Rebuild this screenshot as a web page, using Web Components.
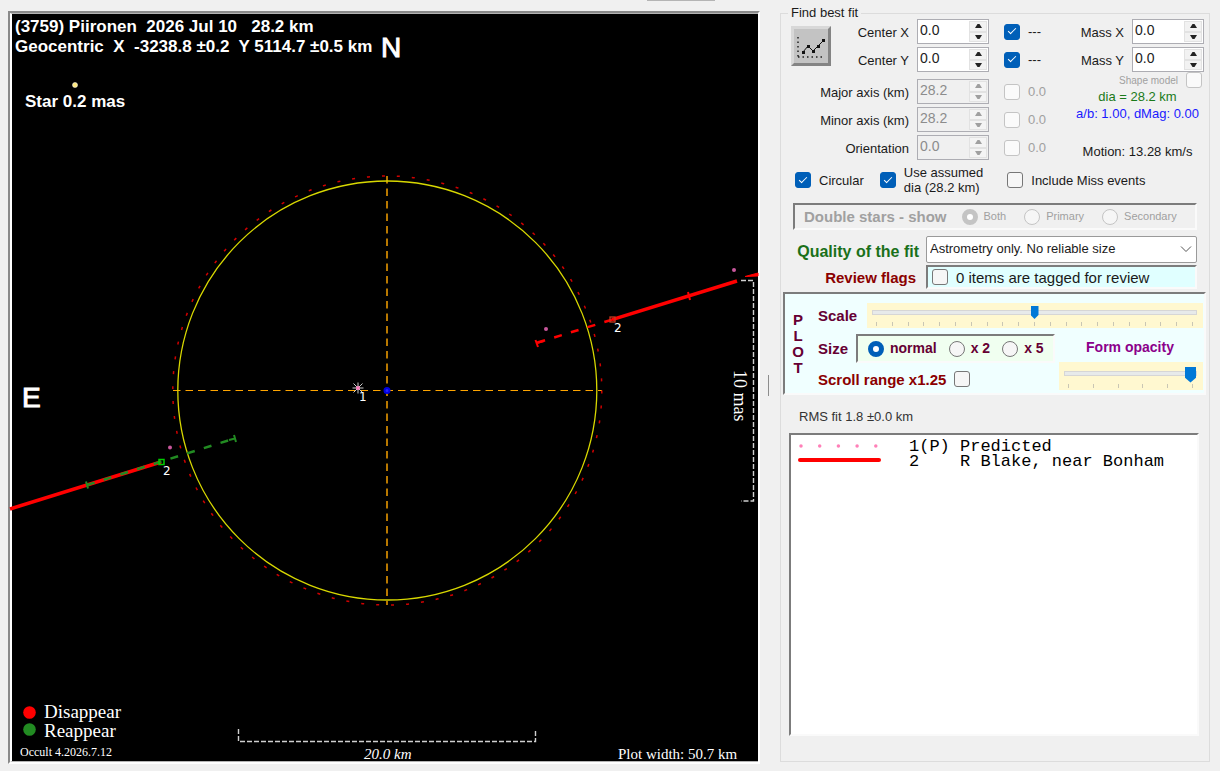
<!DOCTYPE html>
<html lang="en">
<head>
<meta charset="utf-8">
<title>Occult - Asteroid plot</title>
<style>
  body {
    margin: 0;
    background: #f0f0f0;
    color: #1a1a1a;
    font-family: "Liberation Sans", Arial, sans-serif;
    font-size: 13px;
    line-height: 15px;
  }
</style>
</head>
<body>
<occult-window>
  <star-plot slot="plot"></star-plot>
  <fit-panel slot="side"></fit-panel>
</occult-window>

<script>
// Attach an open shadow root and fill it
class BaseElement extends HTMLElement {
    constructor() {
        super();
        this.attachShadow({ mode: 'open' });
    }

    connectedCallback() {
        this.shadowRoot.innerHTML = this.render();
        this.ready();
    }

    attr(name, fallback = '') {
        return this.getAttribute(name) ?? fallback;
    }

    ready() {}
}

class OccultWindow extends BaseElement {
    render() {
        return `
        <style>
          :host {
            display: flex;
            box-sizing: border-box;
            min-height: 100vh;
            padding: 7px 10px 7px 8px;
            position: relative;
          }
          .edge {
            position: absolute;
            top: 0;
            left: 53%;
            width: 68px;
            height: 1px;
            background: #b4b4b4;
          }
          .plot { flex: 1; min-width: 0; display: flex; margin-top: 4px; }
          .splitter {
            width: 20px;
            display: flex;
            align-items: center;
            justify-content: center;
            box-sizing: border-box;
            padding-right: 4px;
          }
          .grip { width: 1px; height: 21px; background: #8c8c8c; }
          .side { flex: 0 0 430px; display: flex; margin-bottom: 2px; }
        </style>
        <div class="edge"></div>
        <div class="plot"><slot name="plot"></slot></div>
        <div class="splitter"><div class="grip"></div></div>
        <div class="side"><slot name="side"></slot></div>
      `;
    }
}

class StarPlot extends BaseElement {
    render() {
        return `
        <style>
          :host {
            flex: 1;
            display: flex;
            min-width: 0;
            border: 2px solid;
            border-color: #8a8a8a #fff #fff #8a8a8a;
            background: #000;
          }
          svg {
            flex: 1;
            min-width: 0;
            display: block;
            border: solid;
            border-width: 1px 0 1px 2px;
            border-color: #b4b4b4 #b4b4b4 #b4b4b4 #fff;
            overflow: visible;
          }
          text { fill: #fff; white-space: pre; }
          .title { font: bold 17px "Liberation Sans", Arial, sans-serif; }
          .compass { font: 28px "Liberation Sans", Arial, sans-serif; stroke: #fff; stroke-width: 1; }
          .chord-no { font: 12px "DejaVu Sans", Verdana, sans-serif; }
          .serif { font-family: "Liberation Serif", "Times New Roman", serif; }
          .key { font-size: 19px; }
          .mas { font-size: 18px; }
          .note { font-size: 15px; }
          .small { font-size: 12px; }
          .italic { font-style: italic; }
        </style>
        <svg viewBox="12 14 746 747" role="img" aria-label="Occultation chords">
          <!-- fitted ellipse, its error ring and axes -->
          <g fill="none">
            <path d="M387 176V605" stroke="#b87800" stroke-width="2" stroke-dasharray="7.5 5"/>
            <path d="M173 390.5H602" stroke="#ffa500" stroke-dasharray="7.5 5"/>
            <circle cx="387.3" cy="390.5" r="214.5" stroke="#d00000" stroke-width="1.5" stroke-dasharray="3 12"/>
            <circle cx="387.3" cy="390.5" r="209.5" stroke="#d8d800" stroke-width="1.3"/>
          </g>

          <!-- observed chord with disappear / reappear error bars -->
          <g fill="none" stroke="#f00">
            <path d="M10 509L161 462M612 319.7L737 281" stroke-width="3.5"/>
            <path d="M745 276.500L758 273V276Z" fill="#f00" stroke-width="1"/>
            <path d="M612 319.7L536 343" stroke-width="2.5" stroke-dasharray="8 9.500"/>
            <path d="M537 343L544 341M535.500 340L538 347M688 292L690 300" stroke-width="2"/>
          </g>
          <g fill="none" stroke="#228b22">
            <path d="M87 485L236 438" stroke-width="2.5" stroke-dasharray="8 9.500"/>
            <path d="M86 481.500L88 488.500M234 435L236 442M229 440L235 438.500" stroke-width="2"/>
          </g>
          <rect x="159" y="459.500" width="5" height="5" fill="none" stroke="#0c0" stroke-width="1.5"/>
          <rect x="610" y="317" width="5" height="5" fill="none" stroke="#c33a20" stroke-width="1.3"/>

          <!-- predicted path -->
          <g fill="#c8579c">
            <circle cx="170" cy="447.500" r="2"/>
            <circle cx="546" cy="329" r="2"/>
            <circle cx="734" cy="270" r="2"/>
          </g>
          <path d="M352.500 388H363.500M358 382.500V393.500M353.500 383.500L362.500 392.500M362.500 383.500L353.500 392.500" stroke="#ccc"/>
          <circle cx="358" cy="388" r="2" fill="#ff80c0"/>
          <circle cx="387" cy="390.500" r="2.5" fill="#22f" stroke="#00d" stroke-width="2"/>
          <circle cx="75" cy="85" r="2.500" fill="#ffe87c" stroke="#eee" stroke-width="0.6"/>

          <!-- scale brackets -->
          <g fill="none" stroke="#d0d0d0" stroke-width="1.4">
            <path d="M741 280.500H753.500V501H741" stroke-dasharray="5 2"/>
            <path d="M238.500 729V741.500H535.500V729" stroke-dasharray="5 2"/>
          </g>

          <text class="title" x="15" y="32">(3759) Piironen  2026 Jul 10   28.2 km</text>
          <text class="title" x="15" y="52">Geocentric  X  -3238.8 ±0.2  Y 5114.7 ±0.5 km</text>
          <text class="title" x="25" y="107">Star 0.2 mas</text>
          <text class="compass" x="381" y="57">N</text>
          <text class="compass" x="22" y="407">E</text>
          <text class="chord-no" x="359" y="401">1</text>
          <text class="chord-no" x="163" y="475">2</text>
          <text class="chord-no" x="614" y="332">2</text>
          <text class="serif mas" transform="translate(734 370) rotate(90)">10 mas</text>
          <circle cx="29.500" cy="712.500" r="6.300" fill="#f00"/>
          <circle cx="29.500" cy="729.500" r="6.300" fill="#228b22"/>
          <text class="serif key" x="44" y="718">Disappear</text>
          <text class="serif key" x="44" y="737">Reappear</text>
          <text class="serif small" x="20" y="756">Occult 4.2026.7.12</text>
          <text class="serif note italic" x="364" y="759">20.0 km</text>
          <text class="serif note" x="618" y="759">Plot width: 50.7 km</text>
        </svg>
      `;
    }
}

// Label with a numeric up / down box
class NumBox extends BaseElement {
    render() {
        const off = this.hasAttribute('disabled') ? 'disabled' : '';
        return `
        <style>
          :host { display: flex; justify-content: flex-end; align-items: center; gap: 8px; height: 25px; }
          label { padding-top: 2px; white-space: nowrap; }
          .box {
            display: flex;
            box-sizing: border-box;
            width: 72px;
            height: 25px;
            border: 1px solid #adadb3;
            background: #fff;
          }
          input {
            flex: 1;
            min-width: 0;
            border: 0;
            padding: 0 0 3px 2px;
            background: none;
            font: inherit;
            font-size: 14px;
            color: #222;
            outline: none;
          }
          .spin { display: flex; flex-direction: column; width: 18px; padding: 1px; }
          button {
            flex: 1;
            display: flex;
            align-items: center;
            justify-content: center;
            border: 1px solid #e2e2e2;
            background: #f2f2f2;
            padding: 0;
            color: #222;
          }
          svg { width: 7px; height: 4px; fill: currentColor; }
          .off { background: #f0f0f0; }
          .off input { color: #8c8c8c; }
          .off button { color: #a0a0a0; background: #f4f4f4; }
        </style>
        <label for="value">${this.attr('label')}</label>
        <div class="box ${off && 'off'}">
          <input id="value" type="text" inputmode="decimal" value="${this.attr('value', '0.0')}" ${off}>
          <div class="spin">
            <button id="up" aria-label="Increase" ${off}><svg viewBox="0 0 7 4"><path d="M2.500 0h2L7 4H0z"/></svg></button>
            <button id="down" aria-label="Decrease" ${off}><svg viewBox="0 0 7 4"><path d="M0 0h7L4.500 4h-2z"/></svg></button>
          </div>
        </div>
      `;
    }

    ready() {
        const input = this.shadowRoot.getElementById('value');
        const step = (d) => { input.value = (parseFloat(input.value) + d).toFixed(1); };
        this.shadowRoot.getElementById('up').addEventListener('click', () => step(0.1));
        this.shadowRoot.getElementById('down').addEventListener('click', () => step(-0.1));
    }
}

class CheckBox extends BaseElement {
    render() {
        const on = this.hasAttribute('checked') ? 'checked' : '';
        const off = this.hasAttribute('disabled') ? 'disabled' : '';
        return `
        <style>
          :host { display: flex; align-items: center; gap: 8px; }
          :host([reverse]) { flex-direction: row-reverse; justify-content: flex-start; }
          input {
            appearance: none;
            flex: none;
            box-sizing: border-box;
            width: 16px;
            height: 16px;
            margin: 0;
            border: 1px solid #777;
            border-radius: 3px;
            background: #f6f6f6;
            display: grid;
            place-items: center;
          }
          input:checked { background: #005fb8; border-color: #005fb8; }
          input:checked::after {
            content: "";
            width: 7px;
            height: 3px;
            margin-bottom: 3px;
            border: solid #fff;
            border-width: 0 0 1px 1px;
            transform: rotate(-45deg);
          }
          input:disabled { border-color: #c4c4c4; background: #fafafa; }
          input:disabled + label { color: #a0a0a0; }
        </style>
        <input id="check" type="checkbox" ${on} ${off}>
        <label for="check"><slot></slot></label>
      `;
    }
}

// options="a|b|c", first one is selected
class RadioGroup extends BaseElement {
    render() {
        const off = this.hasAttribute('disabled') ? 'disabled' : '';
        const items = this.attr('options').split('|').map((name, i) => `
          <span>
            <input type="radio" name="choice" id="r${i}" ${i === 0 ? 'checked' : ''} ${off}>
            <label for="r${i}">${name}</label>
          </span>`).join('');
        return `
        <style>
          :host { display: flex; align-items: center; gap: var(--radio-gap, 12px); }
          span { display: flex; align-items: center; gap: 6px; }
          input {
            appearance: none;
            box-sizing: border-box;
            width: 16px;
            height: 16px;
            margin: 0;
            border: 1px solid #777;
            border-radius: 50%;
            background: #f6f6f6;
          }
          input:checked { border: 5px solid #005fb8; background: #fff; }
          input:disabled { border-color: #c4c4c4; }
          label { white-space: nowrap; }
        </style>
        ${items}
      `;
    }
}

class TrackBar extends BaseElement {
    render() {
        const count = Number(this.attr('ticks', '11'));
        return `
        <style>
          :host { display: block; background: #fff8d0; padding: 3px 6px 2px 5px; }
          input {
            appearance: none;
            display: block;
            width: 100%;
            height: var(--thumb-height, 13px);
            margin: 0;
            background: none;
          }
          input::-webkit-slider-runnable-track {
            height: 5px;
            box-sizing: border-box;
            background: #e7eaea;
            border: 1px solid #d6d6d6;
          }
          input::-webkit-slider-thumb {
            appearance: none;
            width: var(--thumb-width, 8px);
            height: var(--thumb-height, 13px);
            margin-top: -5px;
            background: #0078d7;
            clip-path: polygon(0 0, 100% 0, 100% 70%, 50% 100%, 0 70%);
          }
          .ticks { display: flex; justify-content: space-between; padding: 3px 4px 0; }
          .ticks i { width: 1px; height: 4px; background: #c9c6b4; }
        </style>
        <input type="range" min="0" max="100" value="${this.attr('value', '50')}" aria-label="${this.attr('label')}">
        <div class="ticks">${'<i></i>'.repeat(count)}</div>
      `;
    }
}

// Sunken 3D border
class SunkenBox extends BaseElement {
    render() {
        return `
        <style>
          :host {
            display: flex;
            box-sizing: border-box;
            border: 2px solid;
            border-color: #7c7c7c #fafafa #fafafa #7c7c7c;
          }
        </style>
        <slot></slot>
      `;
    }
}

class ChordList extends BaseElement {
    render() {
        return `
        <style>
          :host {
            display: block;
            font: 17px/15px "Liberation Mono", "Courier New", monospace;
            color: #000;
            padding: 4px 7px;
          }
          .row { display: flex; gap: 28px; white-space: pre; }
          svg { width: 83px; height: 15px; flex: none; }
        </style>
        <div class="row">
          <svg viewBox="0 0 83 15"><path d="M3 7H80" stroke="#ff80b8" stroke-width="3.500" stroke-linecap="round" stroke-dasharray="0 18.700"/></svg>
          <span>1(P) Predicted</span>
        </div>
        <div class="row">
          <svg viewBox="0 0 83 15"><path d="M2 6H81" stroke="#f00" stroke-width="4" stroke-linecap="round"/></svg>
          <span>2    R Blake, near Bonham</span>
        </div>
      `;
    }
}

class FitPanel extends BaseElement {
    render() {
        return `
        <style>
          :host { flex: 1; display: flex; min-width: 0; }
          fieldset {
            flex: 1;
            min-width: 0;
            display: flex;
            flex-direction: column;
            margin: 0;
            padding: 0;
            border: 1px solid #dcdcdc;
          }
          legend { margin-left: 7px; padding: 0 3px; line-height: 12px; }

          .top { display: flex; gap: 24px; padding: 0 5px 0 10px; }
          .fit { flex: 1; display: flex; flex-direction: column; gap: 3px; }
          .pair { display: flex; align-items: center; margin-bottom: 4px; }
          .rows { flex: 1; display: flex; flex-direction: column; gap: 3px; }
          .row { display: flex; align-items: center; gap: 15px; }
          .row num-box { flex: 1; }
          .row check-box { width: 48px; }
          .chart {
            box-sizing: border-box;
            width: 40px;
            height: 40px;
            padding: 0;
            border: 3px outset #d8d8d8;
            background: #c3c3c3;
          }
          .chart svg { display: block; width: 34px; height: 34px; }

          .mass { width: 128px; display: flex; flex-direction: column; gap: 3px; }
          .shape { font-size: 10px; height: 10px; padding-right: 2px; }
          .info { text-align: center; line-height: 17px; padding-right: 5px; }
          .dia { color: #1a7a1a; }
          .mag { color: #1a1aff; white-space: nowrap; }
          .motion { margin-top: 21px; white-space: nowrap; }

          .checks { display: flex; align-items: center; padding: 5px 14px 0; gap: 16px; }
          .checks .miss { margin-left: 8px; }

          .double {
            margin: 8px 12px 0;
            height: 27px;
            align-items: center;
            padding: 0 9px;
            gap: 15px;
            color: #a0a0a0;
            font-size: 11px;
            --radio-gap: 18px;
          }
          .double b { font-size: 15px; white-space: nowrap; }

          .quality {
            display: grid;
            grid-template-columns: 126px 1fr;
            gap: 2px 7px;
            align-items: center;
            padding: 6px 12px 0;
            text-align: right;
            font-size: 15px;
          }
          .quality label, .quality b { font-weight: bold; white-space: nowrap; }
          .good { color: #1a701a; padding-top: 4px; font-size: 16px; }
          .flag { color: #8b0000; padding-right: 3px; }
          .select { position: relative; display: flex; }
          select {
            appearance: none;
            flex: 1;
            height: 27px;
            padding: 0 24px 2px 3px;
            border: 1px solid #9a9a9a;
            border-radius: 2px;
            background: #fff;
            font: inherit;
            font-size: 13px;
            color: #1a1a1a;
          }
          .select svg { position: absolute; right: 5px; top: 9px; width: 12px; height: 8px; pointer-events: none; }
          .review { height: 24px; background: #e0ffff; padding-left: 4px; }

          .plot { margin: 3px 3px 0 2px; background: #f0ffff; color: #660033; font-weight: bold; font-size: 14px; }
          .letters {
            width: 26px;
            display: flex;
            flex-direction: column;
            align-items: center;
            justify-content: center;
            line-height: 16px;
            font-size: 15px;
          }
          .controls { flex: 1; display: flex; flex-direction: column; padding: 9px 1px 3px 7px; }
          .line { display: flex; align-items: center; }
          .name { width: 49px; font-size: 15px; }
          .line track-bar { flex: 1; }
          .lower { display: flex; justify-content: space-between; margin-top: 6px; }
          .sizes { display: flex; flex-direction: column; gap: 8px; }
          .sizes .name { width: 38px; }
          .sizebox { height: 29px; background: #f0fff0; padding: 0 9px 0 10px; }
          .scroll { color: #8b0000; font-size: 15px; align-self: flex-start; }
          .opacity { width: 144px; color: #8b008b; text-align: center; }
          .opacity b { display: block; padding: 6px 2px 7px 0; }
          .opacity track-bar { --thumb-width: 11px; --thumb-height: 16px; }

          .rms { padding: 14px 18px 9px; color: #333; }
          .list { flex: 1; min-height: 80px; margin: 0 10px 25px 8px; background: #fff; }
        </style>
        <fieldset>
          <legend>Find best fit</legend>
          <div class="top">
            <div class="fit">
              <div class="pair">
                <button class="chart" aria-label="Fit">
                  <svg viewBox="0 0 34 34">
                    <path d="M4 8V28M4 28H31" fill="none" stroke="#222" stroke-width="1.500" stroke-dasharray="1.500 3"/>
                    <path d="M9 23L14 17L19 22L24 17L30 11" fill="none" stroke="#111"/>
                    <path d="M8 22h3v3h-3zM13 16h3v3h-3zM18 21h3v3h-3zM23 16h3v3h-3zM28 10h3v3h-3z" fill="#111"/>
                  </svg>
                </button>
                <div class="rows">
                  <div class="row"><num-box label="Center X"></num-box><check-box checked>---</check-box></div>
                  <div class="row"><num-box label="Center Y"></num-box><check-box checked>---</check-box></div>
                </div>
              </div>
              <div class="row"><num-box label="Major axis (km)" value="28.2" disabled></num-box><check-box disabled>0.0</check-box></div>
              <div class="row"><num-box label="Minor axis (km)" value="28.2" disabled></num-box><check-box disabled>0.0</check-box></div>
              <div class="row"><num-box label="Orientation" disabled></num-box><check-box disabled>0.0</check-box></div>
            </div>
            <div class="mass">
              <num-box label="Mass X"></num-box>
              <num-box label="Mass Y"></num-box>
              <check-box class="shape" reverse disabled>Shape model</check-box>
              <div class="info">
                <div class="dia">dia = 28.2 km</div>
                <div class="mag">a/b: 1.00, dMag: 0.00</div>
                <div class="motion">Motion: 13.28 km/s</div>
              </div>
            </div>
          </div>

          <div class="checks">
            <check-box checked>Circular</check-box>
            <check-box checked>Use assumed<br>dia (28.2 km)</check-box>
            <check-box class="miss">Include Miss events</check-box>
          </div>

          <sunken-box class="double">
            <b>Double stars - show</b>
            <radio-group options="Both|Primary|Secondary" disabled></radio-group>
          </sunken-box>

          <div class="quality">
            <label class="good" for="quality">Quality of the fit</label>
            <div class="select">
              <select id="quality">
                <option>Astrometry only. No reliable size</option>
              </select>
              <svg viewBox="0 0 12 8"><path d="M1 1.500L6 6.500L11 1.500" fill="none" stroke="#555"/></svg>
            </div>
            <b class="flag">Review flags</b>
            <sunken-box class="review"><check-box>0 items are tagged for review</check-box></sunken-box>
          </div>

          <sunken-box class="plot">
            <div class="letters"><span>P</span><span>L</span><span>O</span><span>T</span></div>
            <div class="controls">
              <div class="line">
                <span class="name">Scale</span>
                <track-bar label="Scale" value="50" ticks="21"></track-bar>
              </div>
              <div class="lower">
                <div class="sizes">
                  <div class="line">
                    <span class="name">Size</span>
                    <sunken-box class="sizebox"><radio-group options="normal|x 2|x 5"></radio-group></sunken-box>
                  </div>
                  <check-box class="scroll" reverse>Scroll range x1.25</check-box>
                </div>
                <div class="opacity">
                  <b>Form opacity</b>
                  <track-bar label="Form opacity" value="100" ticks="6"></track-bar>
                </div>
              </div>
            </div>
          </sunken-box>

          <div class="rms">RMS fit 1.8 ±0.0 km</div>
          <sunken-box class="list"><chord-list></chord-list></sunken-box>
        </fieldset>
      `;
    }
}

customElements.define('occult-window', OccultWindow);
customElements.define('star-plot', StarPlot);
customElements.define('num-box', NumBox);
customElements.define('check-box', CheckBox);
customElements.define('radio-group', RadioGroup);
customElements.define('track-bar', TrackBar);
customElements.define('sunken-box', SunkenBox);
customElements.define('chord-list', ChordList);
customElements.define('fit-panel', FitPanel);
</script>
</body>
</html>
